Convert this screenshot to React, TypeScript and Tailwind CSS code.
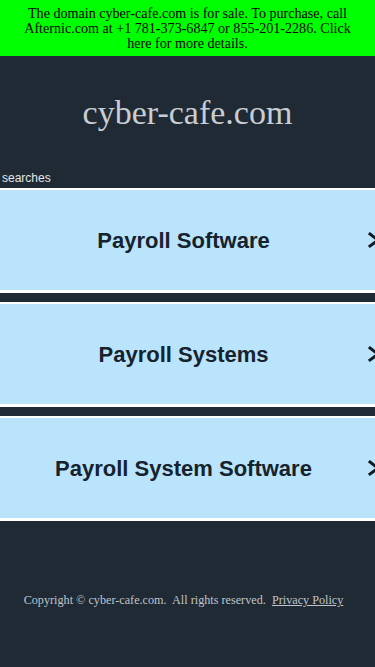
import React from 'react';

const ITEMS = ['Payroll Software', 'Payroll Systems', 'Payroll System Software'];

const Chevron: React.FC = () => (
  <svg width="16" height="18" viewBox="0 0 16 18" fill="none" stroke="#111b24" strokeWidth="3" strokeLinecap="square">
    <path d="M3 3 L11 9 L3 15" />
  </svg>
);

const App: React.FC = () => {
  return (
    <div className="min-h-[667px] bg-[#1f2a35] overflow-hidden">
      {/* Sale banner */}
      <div className="h-14 bg-[#00ff00] px-3 pt-[6px] text-center font-['Liberation_Serif',serif] text-[14.1px] leading-[15px] text-black">
        The domain cyber-cafe.com is for sale. To purchase, call Afternic.com at +1 781-373-6847 or 855-201-2286. Click here for more details.
      </div>

      {/* Header */}
      <div className="h-[112px] flex items-center justify-center">
        <h1 className="font-['Liberation_Serif',serif] text-[34px] text-[#c9cdd1]">cyber-cafe.com</h1>
      </div>

      <div className="h-5 pl-[2px] font-['Liberation_Sans',sans-serif] text-[12px] leading-5 text-[#e4e6e8]">searches</div>

      {/* Search links */}
      <div className="flex flex-col gap-[9px]">
        {ITEMS.map((item) => (
          <div
            key={item}
            className="relative h-[105px] border-t-2 border-b-[3px] border-white bg-[#b9e4fb] flex items-center justify-center"
          >
            <span className="font-['Liberation_Sans',sans-serif] font-bold text-[22px] text-[#16222d] -ml-2">{item}</span>
            <span className="absolute right-[-8px] top-1/2 -translate-y-1/2">
              <Chevron />
            </span>
          </div>
        ))}
      </div>

      {/* Footer */}
      <div className="pt-[70px] pb-12 pr-2 text-center font-['Liberation_Serif',serif] text-[12.2px] text-[#bfc4c9]">
        Copyright © cyber-cafe.com.&nbsp; All rights reserved.&nbsp;&nbsp;<span className="underline">Privacy Policy</span>
      </div>
    </div>
  );
};

export default App;
